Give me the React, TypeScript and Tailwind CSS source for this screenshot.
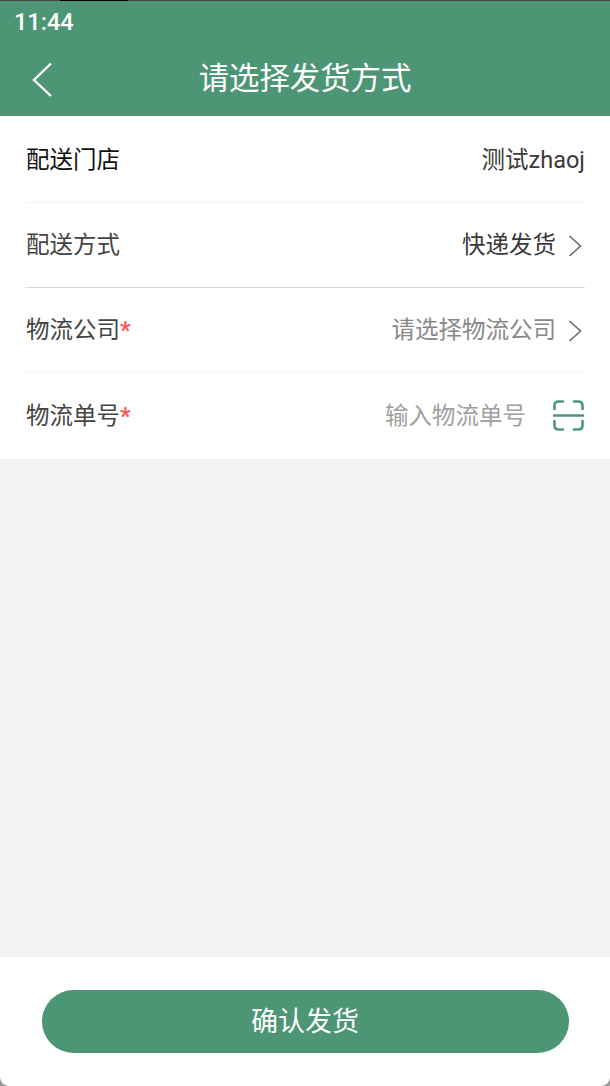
const cjk = "font-['Roboto','Noto_Sans_CJK_SC',sans-serif]";

const Chevron = () => (
  <svg width="14" height="22" viewBox="0 0 14 22" fill="none" stroke="#666666" strokeWidth="1.5" className="ml-[12px] mr-[3px]">
    <path d="M1.5 1 12.5 11 1.5 21" />
  </svg>
);

const ScanIcon = () => (
  <svg width="31" height="31" viewBox="0 0 31 31" fill="none" stroke="#4d9675" strokeWidth="2.6" strokeLinecap="round" className="-mt-[3px]">
    <path d="M10 1.5H5.5Q1.5 1.5 1.5 5.5V9" />
    <path d="M21 1.5H25.5Q29.5 1.5 29.5 5.5V9" />
    <path d="M1 15.5H30" />
    <path d="M1.5 21V25.5Q1.5 29.5 5.5 29.5H10" />
    <path d="M29.5 21V25.5Q29.5 29.5 25.5 29.5H21" />
  </svg>
);

const Star = () => <span className="font-bold text-[#f85a5a]">*</span>;

export default function App() {
  return (
    <div className={`${cjk} relative flex h-[1086px] w-[610px] flex-col overflow-hidden bg-[#f2f2f2]`}>
      {/* top edge of device */}
      <div className="absolute left-0 top-0 h-px w-full bg-[#444444]" />
      <div className="absolute left-[60px] top-0 h-px w-[68px] bg-black" />

      <div className="h-[116px] shrink-0 bg-[#4d9675] text-white">
        <div className="flex h-[45px] items-center pl-[14px] pt-[1px] text-[23.5px] font-medium leading-none">11:44</div>
        <div className="relative flex h-[71px] items-center justify-center pb-[2px] text-[30.4px] leading-none">
          <svg width="22" height="36" viewBox="0 0 22 36" fill="none" stroke="white" strokeWidth="2.4" className="absolute left-[32px] top-[17px]">
            <path d="M19 1.5 2 18 19 34" />
          </svg>
          请选择发货方式
        </div>
      </div>

      <div className="shrink-0 bg-white pt-[2px] text-[23.5px] leading-none">
        <div className="mx-[25px]">
          <div className="flex h-[85px] items-center justify-between border-b border-[#f5f5f5] pl-px pt-[2px]">
            <span className="text-[#111111]">配送门店</span>
            <span className="text-[#3a3a3a]">测试zhaoj</span>
          </div>
          <div className="flex h-[85px] items-center justify-between border-b border-[#d9d9d9] pl-px pt-[2px]">
            <span className="text-[#444444]">配送方式</span>
            <span className="flex items-center text-[#3a3a3a]">快递发货<Chevron /></span>
          </div>
          <div className="flex h-[85px] items-center justify-between border-b border-[#f5f5f5] pl-px pt-[2px]">
            <span className="text-[#444444]">物流公司<Star /></span>
            <span className="flex items-center text-[#888888]">请选择物流公司<Chevron /></span>
          </div>
          <div className="flex h-[86px] items-center justify-between pl-px pt-[2px]">
            <span className="text-[#444444]">物流单号<Star /></span>
            <span className="flex items-center text-[#a0a0a0]">输入物流单号<span className="ml-[27px] mr-px"><ScanIcon /></span></span>
          </div>
        </div>
      </div>

      <div className="flex-1" />

      <div className="h-[129px] shrink-0 bg-[linear-gradient(to_bottom,#ffffff_0,#ffffff_110px,#999999_110px)]">
        <div className="flex h-full items-start justify-center rounded-b-[9px] bg-white pt-[33px]">
          <div className="flex h-[63px] w-[527px] items-center justify-center rounded-full bg-[#4d9675] pt-[2px] text-[27px] leading-none text-white">确认发货</div>
        </div>
      </div>
    </div>
  );
}
